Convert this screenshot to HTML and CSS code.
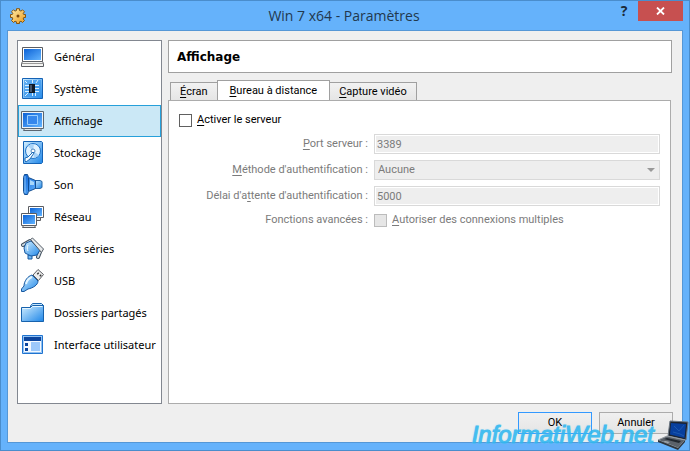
FILE: index.html
```
<!DOCTYPE html>
<html lang="fr">
<head>
    <meta charset="UTF-8">
    <title>Win 7 x64 - Paramètres</title>
    <link rel="stylesheet" href="styles.css">
</head>
<body>
<!-- shared gradients -->
<svg class="defs" width="0" height="0" aria-hidden="true">
    <defs>
        <linearGradient id="blue" x1="0" y1="0" x2="1" y2="1">
            <stop offset="0" stop-color="#0c62d6"/>
            <stop offset="1" stop-color="#62b4ff"/>
        </linearGradient>
        <linearGradient id="light" x1="0" y1="0" x2="1" y2="1">
            <stop offset="0" stop-color="#d3efff"/>
            <stop offset="1" stop-color="#1e86e8"/>
        </linearGradient>
        <linearGradient id="gold" x1="0" y1="0" x2="1" y2="1">
            <stop offset="0" stop-color="#fff0b0"/>
            <stop offset="1" stop-color="#ec9a1c"/>
        </linearGradient>
    </defs>
</svg>

<div class="window">
    <header class="titlebar">
        <svg class="app_icon" width="16" height="16" viewBox="0 0 16 16">
            <path d="M6.500 2.500V.7h3v1.800l1.500.6 1.500-1.300 2 2-1.300 1.500.5 1.200h1.800v3h-1.800l-.5 1.500 1.300 1.500-2 2-1.500-1.300-1.500.6v1.700h-3v-1.700L5 13.200l-1.500 1.300-2-2L2.800 11l-.5-1.500H.5v-3h1.800l.5-1.200-1.300-1.500 2-2L5 3.100z" fill="url(#gold)" stroke="#85540f"/>
            <circle cx="8" cy="8" r="1.500" fill="#7b460a"/>
        </svg>
        <h1>Win 7 x64 - Paramètres</h1>
        <button class="help" type="button" aria-label="Aide">?</button>
        <button class="close" type="button" aria-label="Fermer">
            <svg width="9" height="8" viewBox="0 0 9 8"><path d="M1 .5l7 7M8 .5l-7 7" stroke="#fff" stroke-width="1.800"/></svg>
        </button>
    </header>

    <main class="content">
        <div class="columns">
            <nav class="menu">
                <a href="#">
                    <svg width="24" height="24" viewBox="0 0 24 24">
                        <path d="M2.500 2.500h20v14h-20z" fill="#fff" stroke="#5b5d62"/>
                        <path d="M4 4h17v11H4z" fill="url(#blue)"/>
                        <path d="M2.500 16.500h20l1 2v3h-22v-3z" fill="#f4f4f2" stroke="#5b5d62"/>
                        <path d="M2 18.500h21" stroke="#999"/>
                    </svg>
                    Général</a>
                <a href="#">
                    <svg width="24" height="24" viewBox="0 0 24 24">
                        <path d="M2.500 1.500h20v20h-20z" fill="url(#light)" stroke="#1462b5"/>
                        <path d="M4 3h17v17H4z" fill="#3796ed" opacity=".7"/>
                        <path d="M5 8.500h4M5 11.500h4M5 14.500h4M15 8.500h4M15 11.500h4M15 14.500h4M12.500 3v3M16 6l2-3M12.500 16v3M15.500 16v3M8 16l-3 3M7 6L5 4" stroke="#d8efff"/>
                        <path d="M9 7h6v9H9z" fill="#111a26"/>
                        <path d="M10 8h2v7h-2z" fill="#45566c"/>
                    </svg>
                    Système</a>
                <a href="#" class="active">
                    <svg width="24" height="24" viewBox="0 0 24 24">
                        <path d="M1.500 2.500h22v17h-22z" fill="#eef4f8" stroke="#5b6670"/>
                        <path d="M3 4h19v14H3z" fill="url(#blue)"/>
                        <path d="M7.500 6.500h10v9h-10z" fill="#3587ec" stroke="#9bd0ff"/>
                        <path d="M4.500 19.500h16l1 2h-18z" fill="#dfe5e8" stroke="#5b6670"/>
                    </svg>
                    Affichage</a>
                <a href="#">
                    <svg width="24" height="24" viewBox="0 0 24 24">
                        <path d="M3.500.500h18l1 1v20l-1 1h-18z" fill="url(#light)" stroke="#1462b5"/>
                        <circle cx="13" cy="10" r="7.500" fill="#e0f2ff" stroke="#1e73c9"/>
                        <path d="M13 10l-5-5a7 7 0 0 1 6-2zM13 10l6 4a7 7 0 0 1-5 3z" fill="#a9d3f7"/>
                        <circle cx="13" cy="10" r="2" fill="#fff" stroke="#4e86bd"/>
                        <path d="M5 17l3-1 5-5 1 1-4 6-4 3-1-1z" fill="#f6fbff" stroke="#1c6bb8"/>
                    </svg>
                    Stockage</a>
                <a href="#">
                    <svg width="24" height="24" viewBox="0 0 24 24">
                        <path d="M14 7.500h6l2 1v6l-2 1h-6z" fill="url(#light)" stroke="#2365a5"/>
                        <path d="M4.500 1.500h3l1 3 7 3v8l-7 3-1 3h-3l-1-3v-14z" fill="url(#blue)" stroke="#144f92"/>
                        <path d="M5 3v17" stroke="#8cc6f5" stroke-width="1"/>
                        <path d="M8.500 5v13" stroke="#0b4c99"/>
                        <path d="M10 7l4 2v3h-4z" fill="#a8d8fb"/>
                    </svg>
                    Son</a>
                <a href="#">
                    <svg width="24" height="24" viewBox="0 0 24 24">
                        <path d="M8.500 1.500h15v11h-15z" fill="#fff" stroke="#5b5d62"/>
                        <path d="M10 3h12v8H10z" fill="url(#blue)"/>
                        <path d="M12.500 12.500h8v3h-8z" fill="#e8e8e8" stroke="#5b5d62"/>
                        <path d="M1.500 8.500h15v12h-15z" fill="#fff" stroke="#5b5d62"/>
                        <path d="M3 10h12v9H3z" fill="url(#blue)"/>
                        <path d="M3.500 20.500h11l1 2h-13z" fill="#e8e8e8" stroke="#5b5d62"/>
                    </svg>
                    Réseau</a>
                <a href="#">
                    <svg width="24" height="24" viewBox="0 0 24 24">
                        <path d="M3 8l7-4M18 20l2-5" stroke="#3f4f5e" stroke-width="4" stroke-linecap="round"/>
                        <path d="M3 8l7-4M18 20l2-5" stroke="#d5dde3" stroke-width="2" stroke-linecap="round"/>
                        <path d="M8 18h4v4H8z" fill="#6fb9f4" stroke="#1758a0"/>
                        <path d="M11 4l9 9-3 5-6 1-6-3-1-5 2-5z" fill="url(#light)" stroke="#1758a0"/>
                        <path d="M10.500 2.500l2-1.500 11 11-2 3.500z" fill="#e7e9eb" stroke="#505a64"/>
                        <path d="M8 8c-1 2-1 4 0 6" stroke="#f0faff" fill="none"/>
                    </svg>
                    Ports séries</a>
                <a href="#">
                    <svg width="24" height="24" viewBox="0 0 24 24">
                        <path d="M13 6l5-5.500 5.500 5-5 6z" fill="#ececec" stroke="#5b5d62"/>
                        <path d="M17.500 4l1 1M20 6l1 1" stroke="#333" stroke-width="2"/>
                        <path d="M12 6l6 6c0 4-5 7-10 8l-4 2.500H1.500V20L4 17C4 12 8 7 12 6z" fill="url(#light)" stroke="#1758a0"/>
                        <path d="M6 15c1-4 3-6 6-7" stroke="#e5f6ff" fill="none" stroke-width="2"/>
                    </svg>
                    USB</a>
                <a href="#">
                    <svg width="24" height="24" viewBox="0 0 24 24">
                        <path d="M10.500 5l2-2.500h9l2 2V20h-13z" fill="#c7e8ff" stroke="#1762ad"/>
                        <path d="M1.500 6.500h9l2-2h11v16h-22z" fill="url(#light)" stroke="#1762ad"/>
                        <path d="M2.500 7.500h8l2-2h10" stroke="#e6f6ff" fill="none"/>
                    </svg>
                    Dossiers partagés</a>
                <a href="#">
                    <svg width="24" height="24" viewBox="0 0 24 24">
                        <path d="M2.500 2.500h20v18h-20z" fill="#fff" stroke="#1f73cf"/>
                        <path d="M3.500 3.500h18v16h-18z" fill="#f2f8ff" stroke="#8fc0f2"/>
                        <path d="M4 4h17v4H4zM5 10h3v3H5zM5 15h3v3H5z" fill="#0b449c"/>
                        <path d="M11 9h9v9h-9z" fill="#9cc8fa"/>
                    </svg>
                    Interface utilisateur</a>
            </nav>

            <section class="panel">
                <h2>Affichage</h2>
                <div class="tabs" role="tablist">
                    <button type="button" role="tab"><u>É</u>cran</button>
                    <button type="button" role="tab" class="current" aria-selected="true"><u>B</u>ureau à distance</button>
                    <button type="button" role="tab"><u>C</u>apture vidéo</button>
                </div>
                <form class="pane" id="settings">
                    <div class="enable">
                        <input type="checkbox" id="enable">
                        <label for="enable"><u>A</u>ctiver le serveur</label>
                    </div>
                    <div class="fields">
                        <label for="port"><u>P</u>ort serveur :</label>
                        <input type="text" id="port" value="3389" disabled>

                        <label for="method"><u>M</u>éthode d'authentification :</label>
                        <div class="select">
                            <select id="method" disabled>
                                <option>Aucune</option>
                            </select>
                        </div>

                        <label for="delay">Délai d'a<u>t</u>tente d'authentification :</label>
                        <input type="text" id="delay" value="5000" disabled>

                        <span class="caption">Fonctions avancées :</span>
                        <div class="check">
                            <input type="checkbox" id="multi" disabled>
                            <label for="multi"><u>A</u>utoriser des connexions multiples</label>
                        </div>
                    </div>
                </form>
            </section>
        </div>

        <footer class="actions">
            <button type="submit" form="settings" class="default">OK</button>
            <button type="button">Annuler</button>
        </footer>
    </main>

    <div class="watermark">
        <span>InformatiWeb.net</span>
        <svg width="32" height="30" viewBox="0 0 32 30">
            <path d="M13 1l18 1-2 18-18-4z" fill="#1c2430" stroke="#6c7783"/>
            <path d="M14 3l15 1-1.500 14L13 14.500z" fill="#073f9e"/>
            <path d="M17 6l5 5 5-6M16 12l7 2 4 2" stroke="#1c58ae" fill="none"/>
            <path d="M10 16l18 4-7 8L1 20z" fill="#5b626a" stroke="#989ea4"/>
            <path d="M10 18l14 3-2 2-15-4z" fill="#22282f"/>
            <path d="M8 21l5 1-2 1-5-1z" fill="#a5abb1"/>
            <path d="M1 20l20 8 7-8v2l-7 8L1 22z" fill="#30353b"/>
        </svg>
    </div>
</div>
</body>
</html>
```
FILE: styles.css
```
*{ box-sizing:border-box;}
body,h1,h2,form{ margin:0; padding:0;}
button,input,select{ margin:0; font:inherit; color:inherit; border-radius:0;}
.defs{ position:absolute;}

body{
    font-family: Roboto, "Open Sans", sans-serif;
    font-size: 11px;
    line-height: 16px;
    color: #000;
}
u{
    text-underline-offset: 2px;
}

.window{
    position: relative;
    display: flex;
    flex-direction: column;
    min-height: 100vh;
    padding: 0 6px 7px;
    border: 1px solid #4a8dcc;
    background-color: #65b2fb;
}

/* title bar */
.titlebar{
    display: flex;
    align-items: center;
    height: 29px;
    padding-left: 3px;
    font-family: "Open Sans", sans-serif;
}
.titlebar h1{
    flex: 1;
    padding-left: 52px;
    font-size: 14px;
    font-weight: normal;
    text-align: center;
    color: #22384d;
}
.titlebar button{
    align-self: flex-start;
    height: 20px;
    padding: 0;
    border: 0;
}
.titlebar .help{
    width: 28px;
    background: none;
    font-size: 14px;
    font-weight: bold;
    color: #1c2a38;
}
.titlebar .close{
    width: 45px;
    background-color: #c75050;
}

.content{
    flex: 1;
    display: flex;
    flex-direction: column;
    padding: 9px 9px 8px;
    border: 1px solid #5597d6;
    background-color: #efefef;
}
.columns{
    flex: 1;
    display: flex;
    gap: 6px;
    margin-right: 1px;
}

/* left menu */
.menu{
    width: 145px;
    flex: none;
    border: 1px solid #828790;
    background-color: #fff;
    font-family: "Noto Sans", sans-serif;
}
.menu a{
    display: flex;
    align-items: center;
    gap: 10px;
    height: 32px;
    padding-left: 1px;
    border: 1px solid transparent;
    color: #000;
    text-decoration: none;
    white-space: nowrap;
}
.menu svg{
    flex: none;
}
.menu .active{
    border-color: #26a0da;
    background-color: #cbe8f6;
}

/* right side */
.panel{
    flex: 1;
    display: flex;
    flex-direction: column;
}
.panel h2{
    height: 33px;
    padding-left: 8px;
    border: 1px solid #a0a0a0;
    background-color: #fff;
    font-family: "DejaVu Sans", sans-serif;
    font-size: 12px;
    line-height: 32px;
}
.tabs{
    display: flex;
    align-items: flex-end;
    height: 21px;
    margin: 7px 0 -1px 2px;
}
.tabs button{
    height: 19px;
    padding: 0 9px;
    border: 1px solid #a0a0a0;
    background: linear-gradient(#f2f2f2, #e5e5e5);
    line-height: 16px;
}
.tabs button + button{
    border-left: 0;
}
.tabs .current{
    height: 21px;
    padding: 0 12px;
    border-left: 1px solid #a0a0a0;
    border-bottom-color: #fff;
    background: #fff;
    margin-left: -1px;
}
.pane{
    flex: 1;
    margin-right: 1px;
    padding: 11px 10px;
    border: 1px solid #acacac;
    background-color: #fff;
}
.enable,
.check{
    display: flex;
    align-items: center;
    gap: 5px;
    height: 16px;
}
input[type=checkbox]{
    appearance: none;
    width: 13px;
    height: 13px;
    border: 1px solid #606060;
    background-color: #fff;
}
input[type=checkbox]:disabled{
    border-color: #bcbcbc;
    background-color: #e6e6e6;
}
.fields{
    display: grid;
    grid-template-columns: 189px 1fr;
    gap: 6px;
    margin-top: 6px;
    color: #7b7b7b;
}
.fields > label,
.caption{
    align-self: center;
    text-align: right;
    white-space: nowrap;
}
.fields input[type=text],
.fields select{
    width: 100%;
    height: 20px;
    padding: 0 2px;
    border: 1px solid #d9d9d9;
    background-color: #eee;
}
.fields input[type=text]{
    box-shadow: inset 0 0 0 1px #fff;
}
.fields select{
    appearance: none;
    display: block;
    padding: 0 3px;
    opacity: 1;
}
.select{
    position: relative;
}
.select::after{
    content: "";
    position: absolute;
    top: 8px;
    right: 5px;
    border: 4px solid transparent;
    border-top-color: #999;
    border-bottom: 0;
}

.actions{
    display: flex;
    justify-content: flex-end;
    gap: 7px;
    margin-top: 8px;
}
.actions button{
    width: 74px;
    height: 22px;
    padding: 0;
    border: 1px solid #acacac;
    background: linear-gradient(#f0f0f0, #e5e5e5);
}
.actions .default{
    border-color: #3399ff;
}

.watermark{
    position: absolute;
    right: 0;
    bottom: 0;
    display: flex;
    align-items: center;
    gap: 3px;
    pointer-events: none;
}
.watermark span{
    font-family: "Liberation Sans", sans-serif;
    font-size: 24px;
    font-style: italic;
    line-height: 28px;
    color: #32b8f0;
    -webkit-text-stroke: 1px #32b8f0;
    text-shadow: 0 0 2px #7fd4f8;
    opacity: .9;
}
```
